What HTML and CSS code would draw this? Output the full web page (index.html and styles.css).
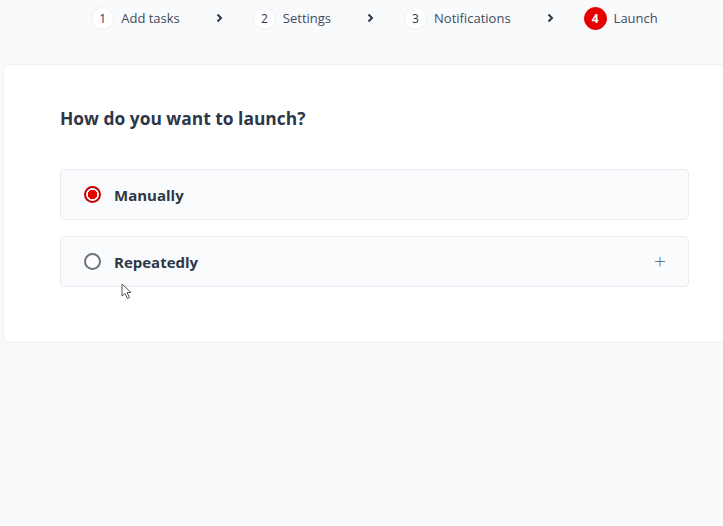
FILE: index.html
```html
<!DOCTYPE html>
<html lang="en">
<head>
    <meta charset="UTF-8">
    <title>Launch</title>
    <link rel="stylesheet" href="styles.css">
</head>
<body>
    <div class="steps">
        <div class="step"><span class="num">1</span><span class="label">Add tasks</span></div>
        <svg class="chev" width="7" height="10" viewBox="0 0 7 10"><polyline points="1.5,1.5 5,5 1.5,8.5" fill="none" stroke="#2d3748" stroke-width="2"/></svg>
        <div class="step"><span class="num">2</span><span class="label">Settings</span></div>
        <svg class="chev" width="7" height="10" viewBox="0 0 7 10"><polyline points="1.5,1.5 5,5 1.5,8.5" fill="none" stroke="#2d3748" stroke-width="2"/></svg>
        <div class="step"><span class="num">3</span><span class="label">Notifications</span></div>
        <svg class="chev" width="7" height="10" viewBox="0 0 7 10"><polyline points="1.5,1.5 5,5 1.5,8.5" fill="none" stroke="#2d3748" stroke-width="2"/></svg>
        <div class="step active"><span class="num">4</span><span class="label">Launch</span></div>
    </div>

    <div class="card">
        <h2>How do you want to launch?</h2>
        <div class="options">
            <label class="option">
                <span class="radio checked"></span>
                <span class="option-text">Manually</span>
            </label>
            <label class="option">
                <span class="radio"></span>
                <span class="option-text">Repeatedly</span>
                <span class="plus">+</span>
            </label>
        </div>
        <svg class="cursor" width="12" height="17" viewBox="0 0 12 17"><path d="M1 1 L1 13 L4 10.5 L6.5 15.5 L8.5 14.5 L6 9.5 L10 9.5 Z" fill="#fff" stroke="#555" stroke-width="1"/></svg>
    </div>
</body>
</html>
```

FILE: styles.css
```css
* {
    box-sizing: border-box;
    margin: 0;
    padding: 0;
    font-family: 'Open Sans', 'Noto Sans', sans-serif;
}

html, body {
    overflow: hidden;
}

body {
    background-color: #f8fafc;
    color: #2d3748;
    width: 723px;
    height: 526px;
}

.steps {
    display: flex;
    justify-content: center;
    align-items: center;
    margin-left: 3px;
    width: 743px;
    height: 36px;
}

.step {
    display: flex;
    align-items: center;
    gap: 7px;
}

.num {
    width: 23px;
    height: 23px;
    border-radius: 50%;
    background: white;
    border: 1px solid #edf0f4;
    display: flex;
    align-items: center;
    justify-content: center;
    font-size: 12px;
    color: #2d3748;
}

.step .label {
    font-size: 13px;
    font-weight: 500;
    color: #3f4a5c;
}

.step.active .num {
    background: #e60000;
    border-color: #e60000;
    color: white;
    font-weight: 700;
}

.chev {
    display: block;
    margin: 0 30px 0 36px;
}

.card {
    position: relative;
    margin: 28px 0 0 3px;
    width: 743px;
    background: white;
    border: 1px solid #edf0f4;
    border-radius: 6px;
    padding: 40px 56px 55px 56px;
}

.card h2 {
    font-size: 17.4px;
    font-weight: 700;
    color: #2d3748;
    line-height: 26px;
    margin-bottom: 38px;
}

.options {
    display: flex;
    flex-direction: column;
    gap: 16px;
}

.option {
    display: flex;
    align-items: center;
    height: 51px;
    padding: 0 22px 0 23px;
    background: #fafbfd;
    border: 1px solid #e8ebf0;
    border-radius: 5px;
}

.radio {
    width: 17px;
    height: 17px;
    border-radius: 50%;
    border: 2px solid #6b7280;
    background: white;
    margin-right: 13px;
}

.radio.checked {
    border-color: #c40000;
    background: radial-gradient(circle, #e60000 0 4.5px, white 5px);
}

.option-text {
    font-size: 15px;
    font-weight: 700;
    color: #2d3748;
    flex: 1;
}

.plus {
    font-size: 21px;
    font-weight: 300;
    color: #6b7789;
    line-height: 1;
}

.cursor {
    position: absolute;
    left: 117px;
    top: 218px;
}
```
